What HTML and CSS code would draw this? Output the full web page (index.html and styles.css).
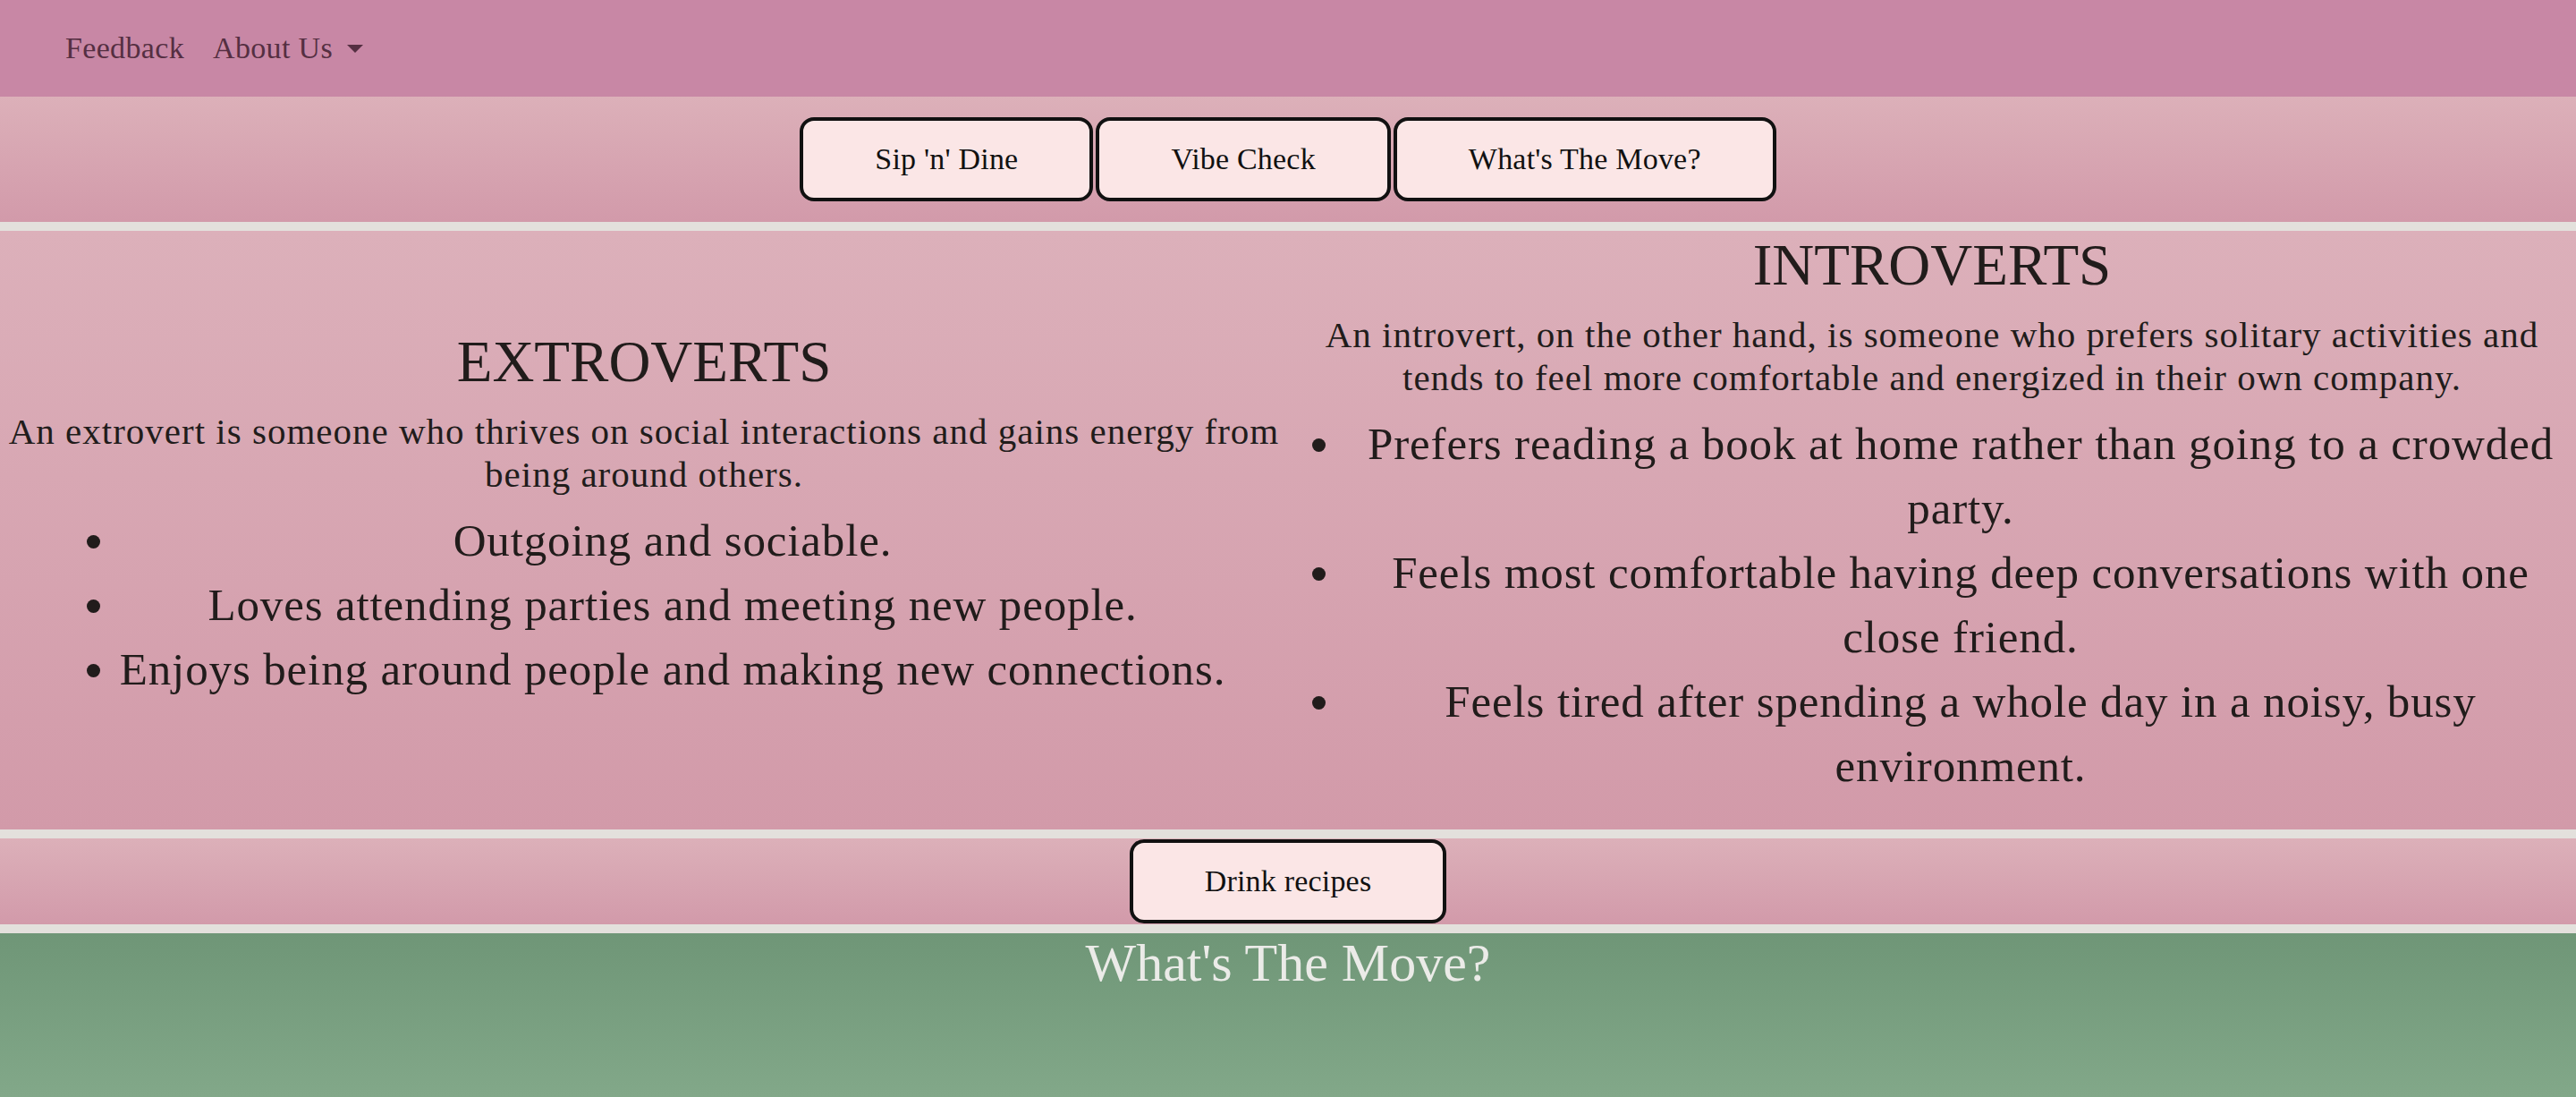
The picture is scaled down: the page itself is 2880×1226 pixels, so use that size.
FILE: index.html
```html
<!DOCTYPE html>
<html lang="en">
<head>
<meta charset="utf-8">
<title>Sip 'n' Dine</title>
<link rel="stylesheet" href="styles.css">
</head>
<body>
<nav class="navbar">
  <a class="nav-link" href="#">Feedback</a>
  <a class="nav-link dropdown" href="#">About Us<span class="caret"></span></a>
</nav>
<div class="band band-top">
  <button class="pill">Sip 'n' Dine</button>
  <button class="pill">Vibe Check</button>
  <button class="pill">What's The Move?</button>
</div>
<div class="sep"></div>
<section class="compare">
  <div class="col">
    <h1 class="col-title">EXTROVERTS</h1>
    <p class="col-text">An extrovert is someone who thrives on social interactions and gains energy from being around others.</p>
    <ul class="traits">
      <li>Outgoing and sociable.</li>
      <li>Loves attending parties and meeting new people.</li>
      <li>Enjoys being around people and making new connections.</li>
    </ul>
  </div>
  <div class="col">
    <h1 class="col-title">INTROVERTS</h1>
    <p class="col-text">An introvert, on the other hand, is someone who prefers solitary activities and tends to feel more comfortable and energized in their own company.</p>
    <ul class="traits">
      <li>Prefers reading a book at home rather than going to a crowded party.</li>
      <li>Feels most comfortable having deep conversations with one close friend.</li>
      <li>Feels tired after spending a whole day in a noisy, busy environment.</li>
    </ul>
  </div>
</section>
<div class="sep"></div>
<div class="band band-drink">
  <button class="pill">Drink recipes</button>
</div>
<div class="sep"></div>
<section class="move">
  <h2 class="move-title">What's The Move?</h2>
</section>
</body>
</html>
```

FILE: styles.css
```css
html, body {
  margin: 0;
  padding: 0;
}
body {
  font-family: "Liberation Serif", "Times New Roman", serif;
  color: #211c1b;
  background: #e3e0dc;
}
.navbar {
  height: 108px;
  background: #c887a5;
  display: flex;
  align-items: center;
  padding: 0 73px;
  box-sizing: border-box;
}
.nav-link {
  font-size: 34px;
  letter-spacing: 0.01em;
  color: #552f42;
  text-decoration: none;
  padding: 0 16px;
  display: flex;
  align-items: center;
}
.nav-link:first-child {
  padding-left: 0;
}
.caret {
  display: inline-block;
  width: 0;
  height: 0;
  margin-left: 16px;
  border-top: 9px solid #552f42;
  border-left: 9px solid transparent;
  border-right: 9px solid transparent;
}
.band {
  display: flex;
  justify-content: center;
  gap: 3px;
  background: linear-gradient(to bottom, #dcb0b9, #d29aaa);
}
.band-top {
  padding: 23px 0;
}
.band-drink {
  padding: 1px 0;
}
.pill {
  font-family: "Liberation Serif", "Times New Roman", serif;
  font-size: 34px;
  letter-spacing: 0.2px;
  line-height: 40px;
  color: #111;
  background: #fbe6e6;
  border: 4px solid #111;
  border-radius: 16px;
  padding: 23px 80px;
  margin: 0;
}
.sep {
  height: 10px;
  background: #e3e0dc;
}
.compare {
  display: grid;
  grid-template-columns: 1fr 1fr;
  align-items: center;
  background: linear-gradient(to bottom, #dcb0ba, #d29aa9);
}
.col {
  text-align: center;
}
.col-title {
  font-size: 65px;
  font-weight: normal;
  line-height: 77px;
  margin: 0 0 15px;
}
.col-text {
  font-size: 41px;
  letter-spacing: 1px;
  line-height: 48px;
  margin: 0 0 14px;
}
.traits {
  display: inline-block;
  margin: 0 0 35px;
  padding-left: 64px;
  font-size: 51px;
  letter-spacing: 0.017em;
  line-height: 72px;
}
.move {
  height: 183px;
  background: linear-gradient(to bottom, #6f9677, #82a889);
}
.move-title {
  margin: 0;
  font-size: 60px;
  font-weight: normal;
  line-height: 67px;
  color: #ebebe8;
  text-align: center;
}
```
